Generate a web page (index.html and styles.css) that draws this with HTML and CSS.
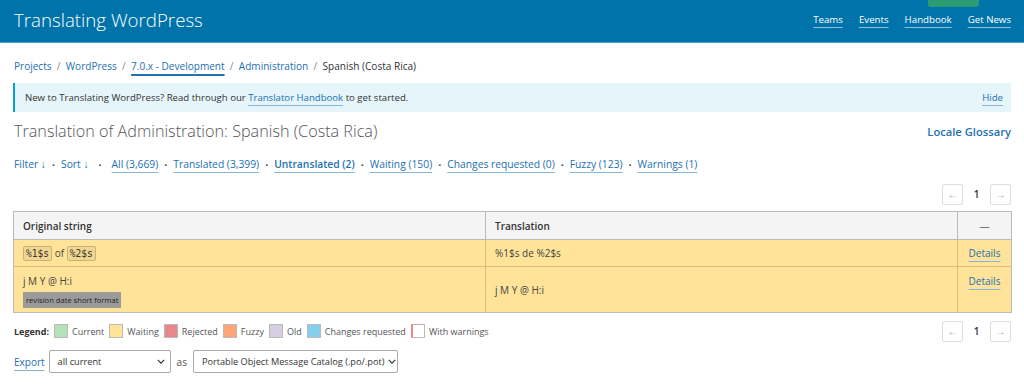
FILE: index.html
```html
<!DOCTYPE html>
<html lang="en">
<head>
<meta charset="utf-8">
<title>Translating WordPress</title>
<link rel="stylesheet" href="styles.css">
</head>
<body>
<header class="site-header">
  <div class="site-title">Translating WordPress</div>
  <span class="get-involved"></span>
  <nav class="site-nav">
    <a href="#">Teams</a>
    <a href="#">Events</a>
    <a href="#">Handbook</a>
    <a href="#">Get News</a>
  </nav>
</header>
<main class="content">
  <div class="breadcrumb">
    <a href="#">Projects</a><span class="sep">/</span><a href="#">WordPress</a><span class="sep">/</span><a href="#" class="current-branch">7.0.x - Development</a><span class="sep">/</span><a href="#">Administration</a><span class="sep">/</span><span class="crumb-text">Spanish (Costa Rica)</span>
  </div>
  <div class="notice">
    <span>New to Translating WordPress? Read through our <a href="#" class="ul">Translator Handbook</a> to get started.</span>
    <a href="#" class="ul">Hide</a>
  </div>
  <div class="title-row">
    <h1 class="page-title">Translation of Administration: Spanish (Costa Rica)</h1>
    <a href="#" class="glossary">Locale Glossary</a>
  </div>
  <div class="filters">
    <a href="#">Filter ↓</a><span class="dot">•</span><a href="#">Sort ↓</a><span class="dot wide">•</span><a href="#" class="ul">All (3,669)</a><span class="dot">•</span><a href="#" class="ul">Translated (3,399)</a><span class="dot">•</span><a href="#" class="ul strong">Untranslated (2)</a><span class="dot">•</span><a href="#" class="ul">Waiting (150)</a><span class="dot">•</span><a href="#" class="ul">Changes requested (0)</a><span class="dot">•</span><a href="#" class="ul">Fuzzy (123)</a><span class="dot">•</span><a href="#" class="ul">Warnings (1)</a>
  </div>
  <div class="paging">
    <span class="pbtn">←</span><span class="pnum">1</span><span class="pbtn">→</span>
  </div>
  <table class="translations">
    <colgroup><col class="w-orig"><col class="w-trans"><col class="w-act"></colgroup>
    <thead>
      <tr><th>Original string</th><th>Translation</th><th class="c-act">—</th></tr>
    </thead>
    <tbody>
      <tr class="row1">
        <td><code class="ph">%1$s</code> of <code class="ph">%2$s</code></td>
        <td>%1$s de %2$s</td>
        <td class="c-act"><a href="#" class="ul">Details</a></td>
      </tr>
      <tr class="row2">
        <td class="orig2">j M Y @ H:i<div class="ctx-wrap"><span class="context">revision date short format</span></div></td>
        <td class="mid">j M Y @ H:i</td>
        <td class="c-act"><a href="#" class="ul">Details</a></td>
      </tr>
    </tbody>
  </table>
  <div class="bottom-row">
    <div class="legend">
      <strong>Legend:</strong>
      <span class="item"><span class="sw current"></span>Current</span>
      <span class="item"><span class="sw waiting"></span>Waiting</span>
      <span class="item"><span class="sw rejected"></span>Rejected</span>
      <span class="item"><span class="sw fuzzy"></span>Fuzzy</span>
      <span class="item"><span class="sw old"></span>Old</span>
      <span class="item"><span class="sw changes"></span>Changes requested</span>
      <span class="item"><span class="sw warn"></span>With warnings</span>
    </div>
    <div class="paging bottom">
      <span class="pbtn">←</span><span class="pnum">1</span><span class="pbtn">→</span>
    </div>
  </div>
  <div class="export">
    <a href="#" class="ul">Export</a>
    <span class="select s1">all current<svg class="chev" viewBox="0 0 10 6" width="8" height="5"><path d="M1 1l4 4 4-4" fill="none" stroke="#333" stroke-width="1.5"/></svg></span>
    <span class="as">as</span>
    <span class="select s2">Portable Object Message Catalog (.po/.pot)<svg class="chev" viewBox="0 0 10 6" width="8" height="5"><path d="M1 1l4 4 4-4" fill="none" stroke="#333" stroke-width="1.5"/></svg></span>
  </div>
</main>
</body>
</html>
```

FILE: styles.css
```css
* { box-sizing: border-box; }
body {
  margin: 0;
  font-family: "Open Sans", "Noto Sans", sans-serif;
  font-size: 10px;
  color: #333;
  background: #fff;
}
a { color: #2271b1; text-decoration: none; }
a.ul { text-decoration: underline; text-underline-offset: 4px; text-decoration-color: #86b5d9; text-decoration-thickness: 1px; }

.site-header {
  position: relative;
  height: 43px;
  background: #0073aa;
  border-bottom: 1px solid #4da0c9;
  display: flex;
  align-items: center;
  justify-content: space-between;
  padding: 0 13px 3px 14px;
}
.site-title { color: #fff; font-size: 18.7px; font-weight: 300; }
.get-involved {
  position: absolute;
  left: 928px; top: 0;
  width: 51px; height: 7px;
  background: #2c9a73;
  border-radius: 0 0 3px 3px;
}
.site-nav { display: flex; gap: 16px; }
.site-nav a { color: #fff; font-size: 9.7px; text-decoration: underline; text-underline-offset: 4px; text-decoration-color: rgba(255,255,255,0.55); }

.content { padding: 0 13px 0 14px; }

.breadcrumb { margin-top: 15px; height: 16px; line-height: 16px; font-size: 10.05px; color: #444; white-space: nowrap; }
.breadcrumb .sep { color: #888; margin: 0 5.3px; }
.breadcrumb .current-branch { text-decoration: underline; text-underline-offset: 4px; text-decoration-thickness: 2px; text-decoration-color: #2271b1; }
.crumb-text { color: #333; }

.notice {
  margin: 9px 0 0 -1px;
  height: 29px;
  background: #e5f5fa;
  border-left: 2px solid #00a0d2;
  display: flex;
  align-items: center;
  justify-content: space-between;
  padding: 0 8px 0 10px;
  font-size: 9.6px;
  color: #333;
}

.title-row { display: flex; justify-content: space-between; align-items: center; margin-top: 8px; height: 22px; }
.page-title { margin: 0; font-size: 16.2px; font-weight: 300; color: #555; }
.glossary { font-size: 11.2px; font-weight: 600; }

.filters { margin-top: 12px; height: 20px; line-height: 20px; font-size: 10.3px; white-space: nowrap; }
.filters .dot { color: #444; margin: 0 6px; font-size: 8px; }
.filters .dot.wide { margin: 0 10px 0 10px; }
.filters .strong { font-weight: 600; }

.paging { display: flex; justify-content: flex-end; align-items: center; margin-top: 9px; height: 22px; }
.pbtn { width: 21px; height: 21px; border: 1px solid #ddd; border-radius: 2px; display: flex; align-items: center; justify-content: center; color: #999; font-size: 10px; }
.pnum { width: 27px; text-align: center; font-size: 10px; color: #333; font-weight: 600; }

.translations { width: calc(100% + 1px); table-layout: fixed; margin-top: 6px; margin-left: -1px; border-collapse: collapse; border: 1px solid #bbb; font-size: 10px; }
.w-orig { width: 472px; }
.w-trans { width: 472px; }
.w-act { width: 54px; }
.translations th { background: #f4f4f4; text-align: left; font-weight: 600; height: 28px; padding: 0 9px; border: 1px solid #bbb; color: #333; }
.translations th.c-act { text-align: center; font-weight: 400; color: #777; }
.translations td { background: #ffe399; border: 1px solid #d6c07f; padding: 0 9px; height: 27px; vertical-align: middle; color: #444; }
.translations tr td:first-child { border-left-color: #bbb; }
.translations tr td:last-child { border-right-color: #bbb; }
.translations tbody tr:last-child td { border-bottom-color: #bbb; }
.translations td.c-act { text-align: center; padding: 0 4px; }
.row2 td { height: 46px; }
.row2 td.orig2, .row2 td.c-act { vertical-align: top; padding-top: 7px; }
.ph { font-family: "DejaVu Sans Mono", monospace; font-size: 9.6px; background: #f1d690; border: 1px solid #c8b27a; border-radius: 2px; padding: 1px 2px; color: #333; }
.ctx-wrap { margin-top: 4px; line-height: 14px; }
.context { display: inline-block; background: #9a9a9a; color: #222; font-size: 7.6px; padding: 1px 3px; border-radius: 1px; }

.bottom-row { display: flex; justify-content: space-between; align-items: center; margin-top: 7px; }
.bottom-row .paging { margin-top: 0; }
.legend { display: flex; align-items: center; gap: 5px; font-size: 9px; color: #555; }
.legend strong { color: #333; }
.legend .item { display: flex; align-items: center; gap: 4px; }
.sw { width: 14px; height: 14px; border: 1px solid #bbb; }
.sw.current { background: #b5e1b9; }
.sw.waiting { background: #ffe399; }
.sw.rejected { background: #e9888b; }
.sw.fuzzy { background: #fba579; }
.sw.old { background: #d6cde4; }
.sw.changes { background: #87ceeb; }
.sw.warn { background: #fff; border-left: 2px solid #e9888b; border-top-color: #e0a0a0; }

.export { display: flex; align-items: center; margin-top: 8px; font-size: 10px; white-space: nowrap; }
.select { display: flex; align-items: center; justify-content: space-between; height: 23px; border: 1px solid #aaa; border-radius: 2px; padding: 0 5px 0 8px; color: #333; background: #fff; font-size: 9.2px; }
.s1 { width: 122px; margin-left: 4px; }
.s2 { width: 205px; }
.as { margin: 0 6px; color: #555; }
.chev { margin-left: 4px; flex-shrink: 0; }
```
